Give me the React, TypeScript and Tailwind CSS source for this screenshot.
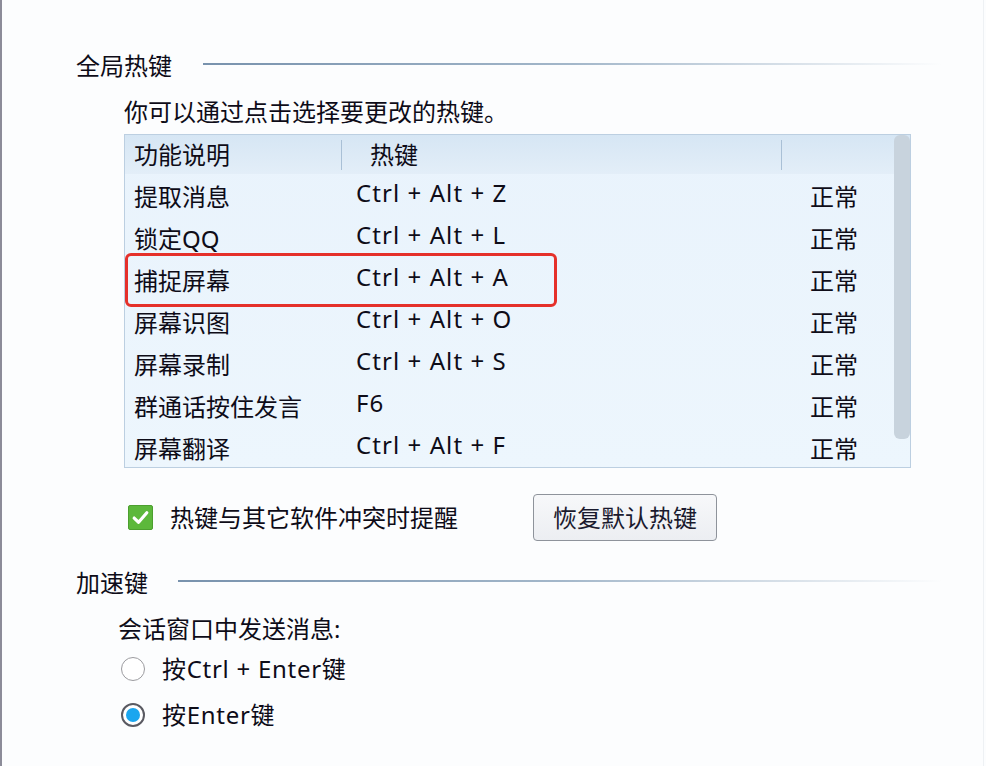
import React from "react";

const rows: [string, string][] = [
  ["提取消息", "Ctrl + Alt + Z"],
  ["锁定QQ", "Ctrl + Alt + L"],
  ["捕捉屏幕", "Ctrl + Alt + A"],
  ["屏幕识图", "Ctrl + Alt + O"],
  ["屏幕录制", "Ctrl + Alt + S"],
  ["群通话按住发言", "F6"],
  ["屏幕翻译", "Ctrl + Alt + F"],
];

function SectionTitle({ title, lineLeft }: { title: string; lineLeft: string }) {
  return (
    <div className="flex items-center h-[32px]">
      <span className="pl-[74px] text-[24px] leading-[32px]">{title}</span>
      <div className={`${lineLeft} flex-1 mr-[44px] h-[2px] -mt-[5px] bg-gradient-to-r from-[#7892ad] via-[#a3b7ca] to-transparent`} />
    </div>
  );
}

export default function App() {
  return (
    <div
      className="w-[986px] h-[766px] overflow-hidden bg-[#fcfdfe] border-l-2 border-[#8c8c99] text-[#0e0c18] relative"
      style={{ fontFamily: '"Noto Sans", "Noto Sans CJK SC", sans-serif' }}
    >
      <div className="absolute right-[2px] top-0 bottom-0 w-px bg-[#eef1f4]" />
      <div className="h-[50px]" />
      <SectionTitle title="全局热键" lineLeft="ml-[31px]" />
      <div className="mt-[14px] pl-[122px] text-[24px] leading-[32px]">你可以通过点击选择要更改的热键。</div>

      {/* table */}
      <div className="mt-[6px] ml-[122px] w-[787px] h-[334px] border border-[#bccfe1] bg-gradient-to-b from-[#e9f3fc] to-[#edf6fd] relative">
        <div className="h-[39px] flex items-center bg-gradient-to-b from-[#d6e6f4] to-[#e3eef8] text-[24px]">
          <div className="w-[216px] pl-[9px] leading-[32px]">功能说明</div>
          <div className="w-px h-[30px] bg-[#a9c0d6]" />
          <div className="w-[439px] pl-[28px] leading-[32px]">热键</div>
          <div className="w-px h-[30px] bg-[#a9c0d6]" />
        </div>
        {rows.map(([name, key]) => (
          <div key={name} className="h-[42px] flex items-center text-[24px]">
            <div className="w-[216px] pl-[9px] leading-[32px] mt-[4px]">{name}</div>
            <div className="w-[440px] pl-[15px] leading-[32px] tracking-[0.045em] -mt-[4px]">{key}</div>
            <div className="pl-[29px] leading-[32px] mt-[4px]">正常</div>
          </div>
        ))}
        {/* scrollbar */}
        <div className="absolute right-0 top-0 w-[16px] h-[304px] rounded-[6px] bg-[#c8d3dd]" />
        {/* highlight */}
        <div className="absolute left-[0px] top-[118px] w-[432px] h-[54px] border-[3px] border-[#e5302a] rounded-[6px]" />
      </div>

      {/* checkbox row */}
      <div className="mt-[26px] h-[47px] flex items-center">
        <div className="ml-[126px] w-[25px] h-[25px] rounded-[2px] bg-[#5cb83b] border border-[#4c9f2f] flex items-center justify-center">
          <svg width="19" height="19" viewBox="0 0 18 18">
            <path d="M3 9.5 L7.2 13.5 L15 4.5" fill="none" stroke="#ffffff" strokeWidth="3" strokeLinecap="round" strokeLinejoin="round" />
          </svg>
        </div>
        <span className="ml-[17px] text-[24px] leading-[32px]">热键与其它软件冲突时提醒</span>
        <button className="ml-[75px] w-[184px] h-[47px] rounded-[4px] border border-[#8e939b] bg-gradient-to-b from-[#f7f8fa] to-[#eceef2] text-[24px] leading-[32px] text-[#1a1a2e]">
          恢复默认热键
        </button>
      </div>

      <div className="mt-[26px]">
        <SectionTitle title="加速键" lineLeft="ml-[30px]" />
      </div>
      <div className="mt-[14px] pl-[116px] text-[24px] leading-[32px]">会话窗口中发送消息:</div>

      <div className="mt-[1px] h-[46px] flex items-center">
        <div className="ml-[119px] w-[24px] h-[24px] rounded-full border-[1.5px] border-[#9b9b9f] bg-white" />
        <span className="ml-[17px] text-[24px] leading-[32px] tracking-[0.03em]">按Ctrl + Enter键</span>
      </div>
      <div className="h-[46px] flex items-center">
        <div className="ml-[119px] w-[24px] h-[24px] rounded-full border-2 border-[#5a5a62] bg-white flex items-center justify-center">
          <div className="w-[14px] h-[14px] rounded-full bg-[#1aa6ef]" />
        </div>
        <span className="ml-[17px] text-[24px] leading-[32px] tracking-[0.03em]">按Enter键</span>
      </div>
    </div>
  );
}
